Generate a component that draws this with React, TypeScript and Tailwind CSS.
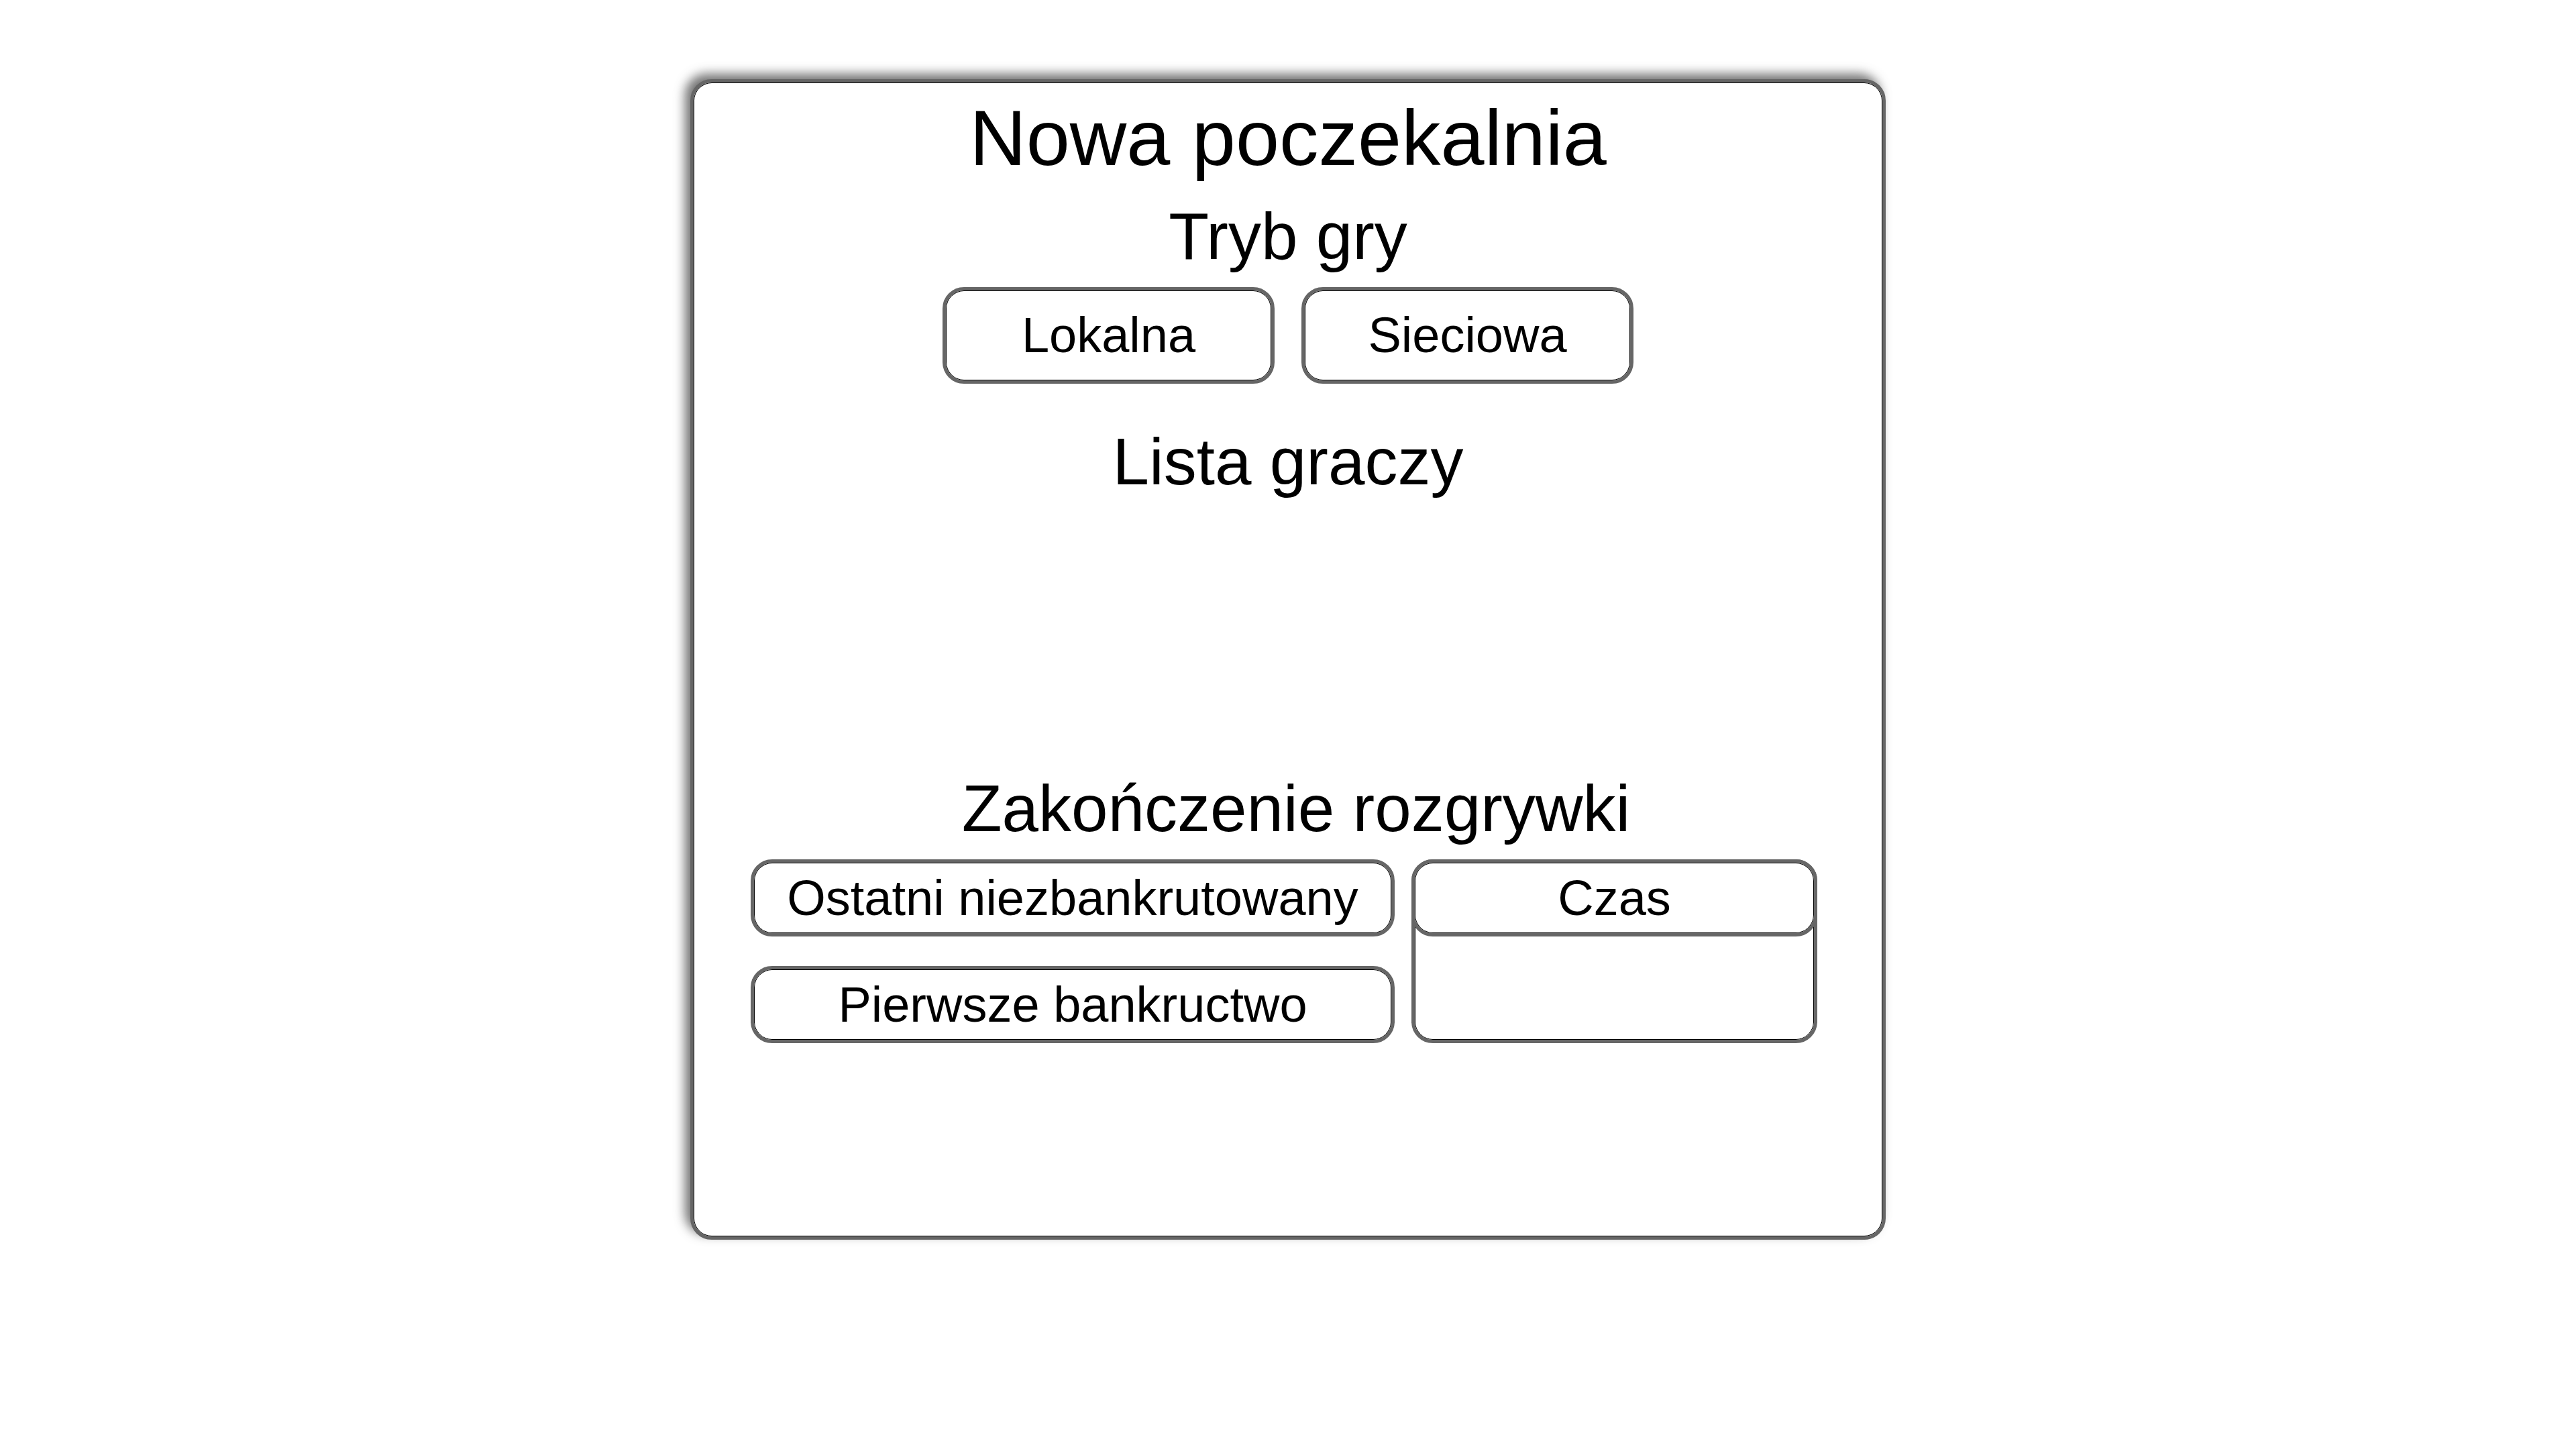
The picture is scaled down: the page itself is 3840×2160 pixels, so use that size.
import { useState } from 'react';

type Mode = 'local' | 'network';

function OptionButton({ label, className, onClick }: { label: string; className: string; onClick?: () => void }) {
  return (
    <button
      onClick={onClick}
      className={
        'flex items-center justify-center rounded-[32px] border-[5px] border-[#666] bg-white text-[74px] leading-none text-black shadow-[inset_0_0_0_1px_#000] ' +
        className
      }
    >
      {label}
    </button>
  );
}

export default function App() {
  const [mode, setMode] = useState<Mode>('local');
  const players: string[] = [];

  return (
    <div className="min-h-screen w-full bg-white pt-[118px] font-['Liberation_Sans',Arial,sans-serif] text-black">
      <div className="mx-auto flex h-[1730px] w-[1782px] flex-col items-center rounded-[32px] border-[5px] border-[#666] bg-white pt-[24px] shadow-[inset_0_0_0_1px_#000,-8px_-8px_16px_rgba(70,70,70,0.75)]">
        {/* Header */}
        <h1 className="text-[117px] leading-none">Nowa poczekalnia</h1>

        {/* Game mode */}
        <h2 className="mt-[39px] text-[98px] leading-none">Tryb gry</h2>
        <div className="mt-[27px] flex gap-[40px]">
          <OptionButton label="Lokalna" className="h-[144px] w-[495px]" onClick={() => setMode('local')} />
          <OptionButton label="Sieciowa" className="h-[144px] w-[495px]" onClick={() => setMode('network')} />
        </div>

        {/* Players */}
        <h2 className="mt-[67px] text-[98px] leading-none">Lista graczy</h2>
        <div className="h-[419px] w-full" data-mode={mode}>
          {players.map((p) => (
            <div key={p}>{p}</div>
          ))}
        </div>

        {/* End condition */}
        <h2 className="ml-[24px] text-[98px] leading-none">Zakończenie rozgrywki</h2>
        <div className="mr-[12px] mt-[27px] flex gap-[25px]">
          <div className="flex w-[960px] flex-col gap-[44px]">
            <OptionButton label="Ostatni niezbankrutowany" className="h-[115px] w-full" />
            <OptionButton label="Pierwsze bankructwo" className="h-[115px] w-full" />
          </div>
          <div className="h-[274px] w-[605px] rounded-[32px] border-[5px] border-[#666] shadow-[inset_0_0_0_1px_#000]">
            <OptionButton label="Czas" className="-mx-[5px] -mt-[5px] h-[115px] w-[605px]" />
          </div>
        </div>
      </div>
    </div>
  );
}
